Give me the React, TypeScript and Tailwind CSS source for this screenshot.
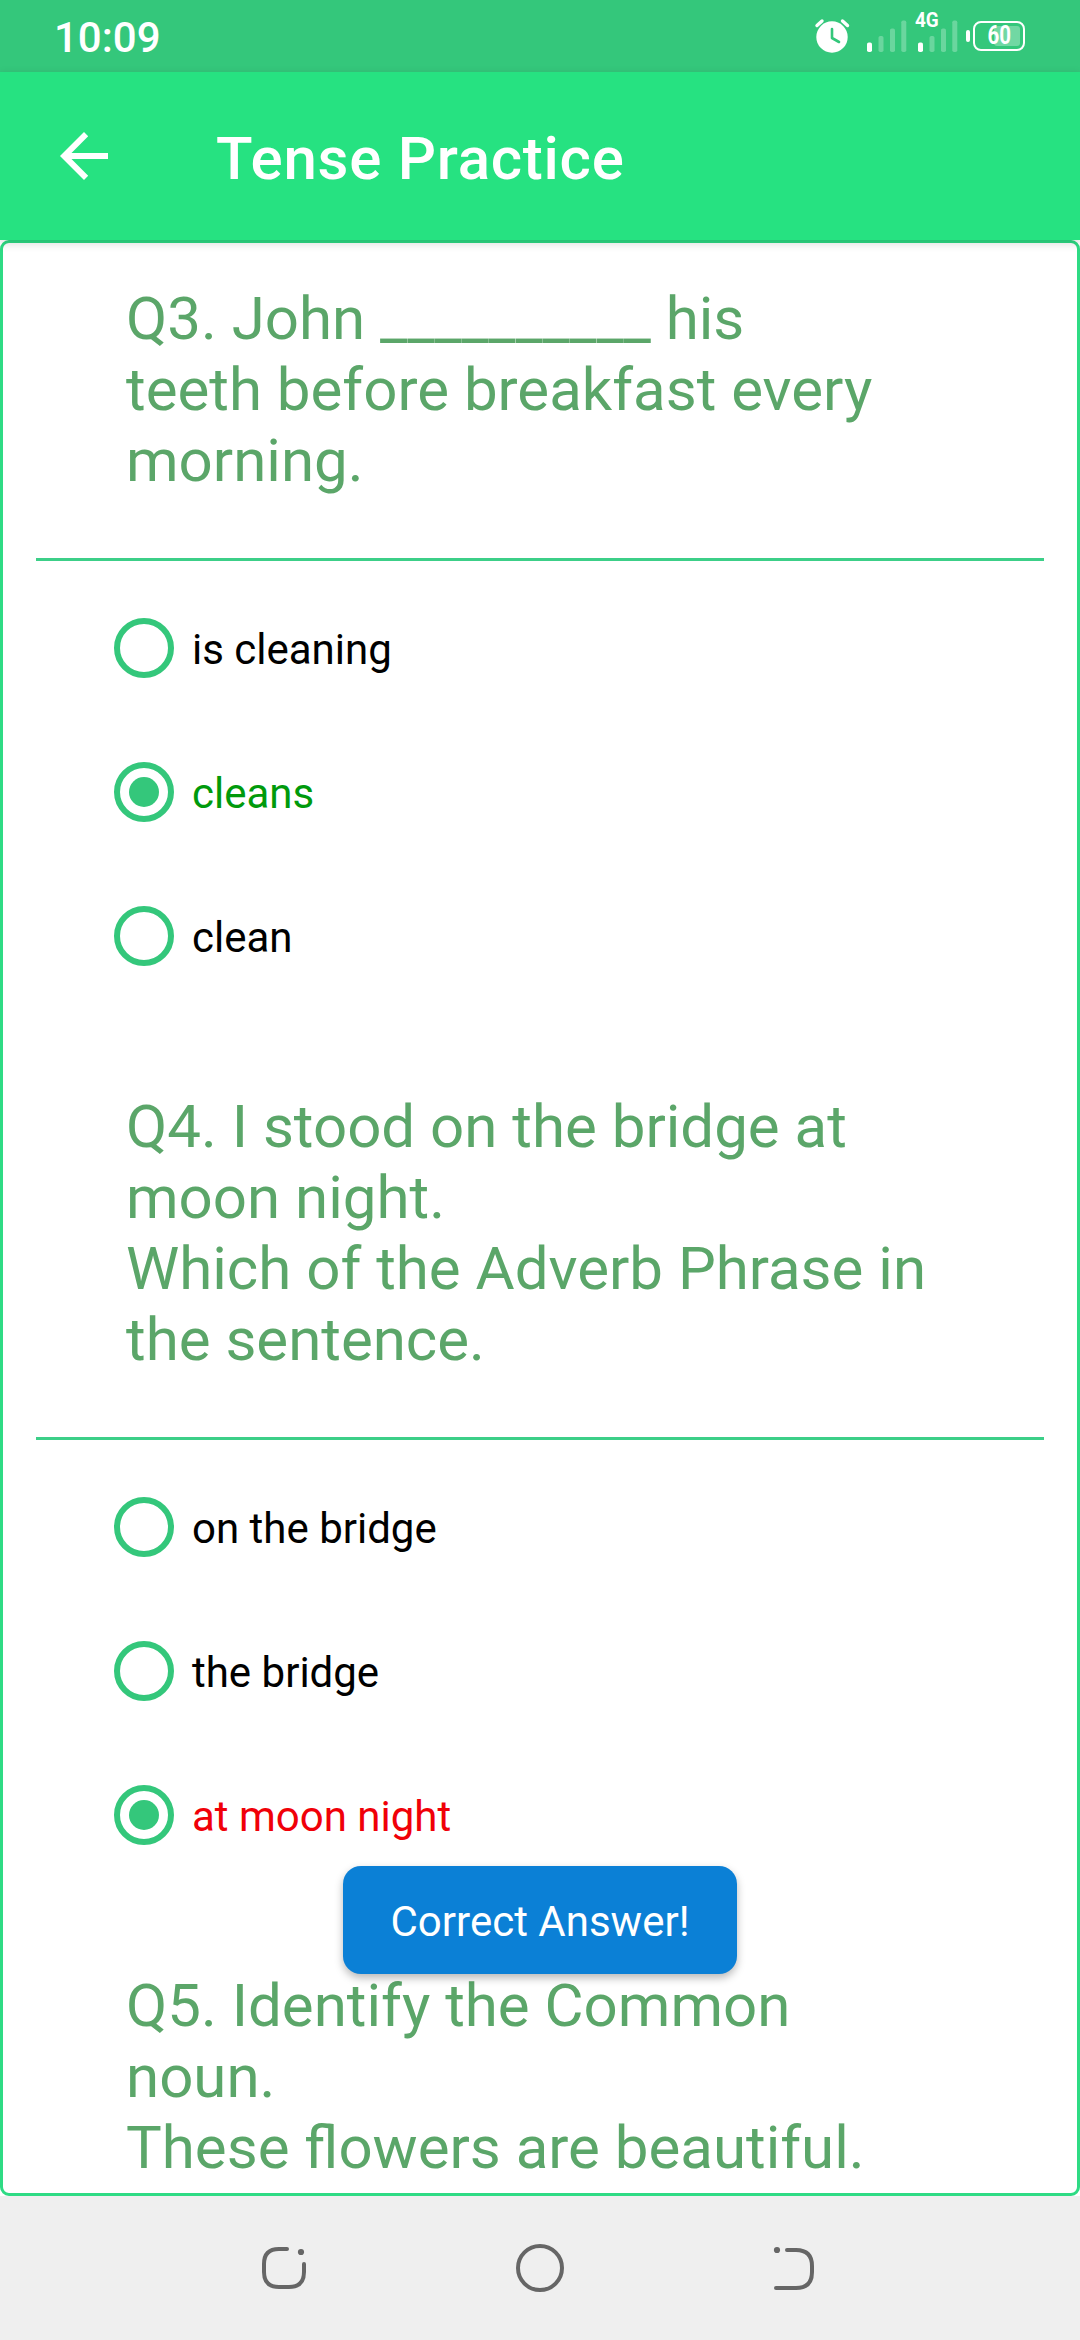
import clsx from 'clsx'

type OptionState = 'idle' | 'correct' | 'wrong'

interface Option {
  label: string
  state: OptionState
}

interface Question {
  id: number
  lines: string[]
  options: Option[]
}

const QUESTIONS: Question[] = [
  {
    id: 3,
    lines: ['Q3. John __________ his', 'teeth before breakfast every', 'morning.'],
    options: [
      { label: 'is cleaning', state: 'idle' },
      { label: 'cleans', state: 'correct' },
      { label: 'clean', state: 'idle' },
    ],
  },
  {
    id: 4,
    lines: ['Q4. I stood on the bridge at', 'moon night.', 'Which of the Adverb Phrase in', 'the sentence.'],
    options: [
      { label: 'on the bridge', state: 'idle' },
      { label: 'the bridge', state: 'idle' },
      { label: 'at moon night', state: 'wrong' },
    ],
  },
  {
    id: 5,
    lines: ['Q5. Identify the Common', 'noun.', 'These flowers are beautiful.'],
    options: [],
  },
]

const AlarmIcon = () => (
  <svg width="38" height="38" viewBox="0 0 38 38" fill="none">
    <circle cx="18" cy="20" r="15.7" fill="#fff" />
    <path d="M3 8.5 8 4M28.5 4 33.5 8.5" stroke="#fff" strokeWidth="3.4" strokeLinecap="round" />
    <path d="M18 12v9l7 4" stroke="#34c77b" strokeWidth="2.6" strokeLinecap="round" strokeLinejoin="round" />
  </svg>
)

const SignalIcon = () => (
  <svg width="40" height="32" viewBox="0 0 40 32">
    <rect x="0" y="22.5" width="5" height="9.5" rx="1.8" fill="#fff" />
    <rect x="11.5" y="16" width="5" height="16" rx="1.8" fill="#fff" fillOpacity=".27" />
    <rect x="23" y="8.5" width="5" height="23.5" rx="1.8" fill="#fff" fillOpacity=".27" />
    <rect x="34.3" y="0.5" width="5" height="31.5" rx="1.8" fill="#fff" fillOpacity=".27" />
  </svg>
)

const StatusBar = () => (
  <div className="flex h-[72px] shrink-0 items-start bg-[#34c77b] pl-[54px] pr-[55px] text-white">
    <span className="mt-[13px] text-[42px] leading-[50px] font-medium">10:09</span>
    <div className="ml-auto flex items-start">
      <div className="mt-[17px]">
        <AlarmIcon />
      </div>
      <div className="mt-[20px] ml-[15px]">
        <SignalIcon />
      </div>
      <div className="relative mt-[20px] ml-[11px]">
        <SignalIcon />
        <span className="absolute -top-[10px] -left-[3px] origin-left scale-x-[.9] text-[21px] leading-[21px] font-bold">4G</span>
      </div>
      <div className="mt-[30px] ml-[8px] h-[12px] w-[4px] rounded-full bg-white" />
      <div className="relative mt-[21px] ml-[3px] flex h-[30px] w-[52px] items-center justify-center rounded-[8px] border-[2.5px] border-white">
        <div className="absolute top-[3px] right-[3px] bottom-[3px] w-[26px] rounded-[3px] bg-white/30" />
        <span className="relative scale-x-[.82] text-[25px] leading-[24px] font-bold">60</span>
      </div>
    </div>
  </div>
)

const AppBar = () => (
  <header className="relative z-10 flex h-[168px] shrink-0 items-center bg-[#26e281] pl-[60px] text-white shadow-[0_3px_9px_rgba(0,0,0,0.16)]">
    <svg width="48" height="48" viewBox="0 0 48 48" fill="#fff">
      <path d="M48 21H11.5L28.2 4.2 24 0 0 24l24 24 4.2-4.2L11.5 27H48z" />
    </svg>
    <h1 className="ml-[108px] pt-[5px] text-[60px] leading-[70px] font-medium tracking-[0.75px]">Tense Practice</h1>
  </header>
)

const Radio = ({ checked }: { checked: boolean }) => (
  <span className="flex size-[60px] items-center justify-center rounded-full border-[6px] border-[#34c77b]">
    {checked && <span className="size-[30px] rounded-full bg-[#34c77b]" />}
  </span>
)

const OptionRow = ({ label, state }: Option) => (
  <label className="flex h-[144px] items-center pl-[111px]">
    <Radio checked={state !== 'idle'} />
    <span
      className={clsx(
        'ml-[18px] pt-[3px] text-[42px] leading-[50px]',
        state === 'idle' && 'text-black',
        state === 'correct' && 'text-[#009a0c]',
        state === 'wrong' && 'text-[#f00008]',
      )}
    >
      {label}
    </span>
  </label>
)

const QuestionBlock = ({ lines, options }: Question) => (
  <section className="pt-[83px]">
    <div className="pl-[123px] text-[60px] leading-[71px] text-[#5ba669]">
      {lines.map((line) => (
        <p key={line} className="whitespace-nowrap">{line}</p>
      ))}
    </div>
    <div className="mx-[33px] mt-[62px] mb-[15px] h-[3px] bg-[#3ccf88]" />
    {options.map((o) => (
      <OptionRow key={o.label} {...o} />
    ))}
  </section>
)

const Toast = ({ text }: { text: string }) => (
  <div className="absolute top-[1866px] left-[343px] flex h-[108px] w-[394px] items-center justify-center rounded-[18px] bg-[#0b80d6] pt-[4px] text-[42px] leading-[50px] text-white shadow-[0_4px_9px_rgba(0,0,0,0.28)]">
    {text}
  </div>
)

const NavBar = () => (
  <nav className="flex h-[144px] shrink-0 items-center gap-[208px] bg-[#efefef] pl-[260px]">
    <svg width="48" height="48" viewBox="0 0 48 48" fill="none" stroke="#666" strokeWidth="4" strokeLinecap="round">
      <path d="M27 5H19Q4 5 4 20V28Q4 43 19 43H29Q44 43 44 28V20" />
      <circle cx="41" cy="8" r="3.1" fill="#666" stroke="none" />
    </svg>
    <svg width="48" height="48" viewBox="0 0 48 48" fill="none" stroke="#666" strokeWidth="4">
      <circle cx="24" cy="24" r="22" />
    </svg>
    <svg width="48" height="48" viewBox="0 0 48 48" fill="none" stroke="#666" strokeWidth="4" strokeLinecap="round">
      <path d="M15 6H24Q40 6 40 22V28Q40 44 24 44H4" />
      <circle cx="5" cy="6" r="3.1" fill="#666" stroke="none" />
    </svg>
  </nav>
)

const App = () => (
  <div className="relative flex h-[2340px] w-[1080px] flex-col overflow-hidden bg-white font-[Roboto,sans-serif]">
    <StatusBar />
    <AppBar />
    <main className="h-[1956px] overflow-hidden rounded-[9px] border-[3px] border-[#2edb84] bg-white">
      <div className="-mt-[43px]">
        {QUESTIONS.map((q) => (
          <QuestionBlock key={q.id} {...q} />
        ))}
      </div>
    </main>
    <NavBar />
    <Toast text="Correct Answer!" />
  </div>
)

export default App
